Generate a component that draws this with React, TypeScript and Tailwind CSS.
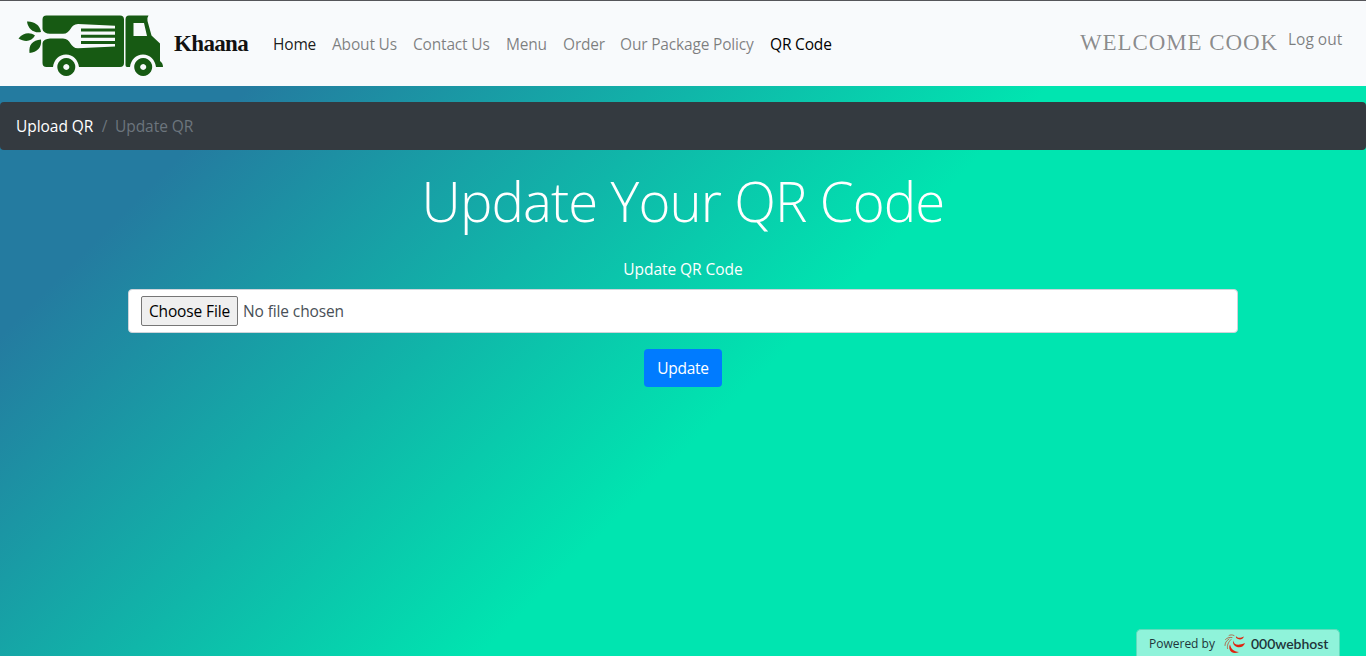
import React from "react";

const links = [
  { label: "Home", cls: "w-[59px] text-black/90" },
  { label: "About Us", cls: "w-[81px] text-black/50" },
  { label: "Contact Us", cls: "w-[93px] text-black/50" },
  { label: "Menu", cls: "w-[57px] text-black/50" },
  { label: "Order", cls: "w-[57px] text-black/50" },
  { label: "Our Package Policy", cls: "w-[150px] text-black/50" },
  { label: "QR Code", cls: "w-[80px] text-black" },
];

function TruckLogo() {
  return (
    <svg width="150" height="70" viewBox="15 10 150 70" fill="#175a13" className="mt-[3px] block shrink-0">
      <path d="M27 21.500c6-.5 13 3 14 10.500c-6.500 1.500-13-2.500-14-10.500z" />
      <path d="M18.500 38.500c5-6 11.500-6.500 16.500-3c-3 6-10 7-16.500 3z" />
      <path d="M29.500 53c-1-8 3-13 11.500-13.500c1 8-4 13-11.500 13.500z" />
      <path d="M46.500 15.500H120q4 0 4 4V63q0 4-4 4H79c-1-7.500-6-12.500-13-12.500S54 59.500 53 67h-6.500q-4 0-4-4V19.500q0-4 4-4z" />
      <path d="M42 29q2 4.500 8 4.800H63c8 0 7-9.800 15-9.800l37 1.800v20.700l-37 1.800c-8 0-7-9.800-15-9.800H50q-6 .3-8 4.800z" fill="#f8fafc" />
      <path d="M81 28.500h34v3H81zM81 34.700h34v3H81zM81 40.900h34v3H81z" />
      <path fillRule="evenodd" d="M131 15.500h17.500q-2 3-1 5.500l4 14.500l8.500 8v17.500q3 2 3 6h-7c-1-7.500-6-12.500-13-12.500s-12 5-13 12.500h-3q-1.500 0-1.500-2v-45.500q0-4 3.500-4zM133.500 23v13h13.500l-3-13z" />
      <path fillRule="evenodd" d="M66.300 58a9 9 0 1 0 .01 0zM66.300 64a3 3 0 1 1-.01 0z" />
      <path fillRule="evenodd" d="M143.200 58a9 9 0 1 0 .01 0zM143.200 64a3 3 0 1 1-.01 0z" />
    </svg>
  );
}

function HostLogo() {
  return (
    <svg width="26" height="24" viewBox="0 0 26 24" fill="#df2411" className="shrink-0">
      <path d="M11 8.500c1 4.500 5 5.500 12 2.500c-1 3.500-4.500 5-8 4c-3-1-4.500-3.500-4-6.500z" />
      <path d="M14 4c1 2 4 2.500 8 .5c-1 2.500-3.500 3.500-6 2.500c-1.500-.5-2.500-1.500-2-3z" />
      <path d="M8 12.500c1 4.500 3.500 7 9 7.500c-4 2-8.500 1-9.500-3c-.4-2-.2-3 .5-4.500z" />
      <path d="M9 7.500c-3 3-4 6-3.500 9M7 7c-3 2-4 4-4 6.500M10 5.500c-3-.5-5 .5-6.500 2M12 3.500c-2-1-4-.7-5 0" fill="none" stroke="#b5502f" strokeWidth=".8" strokeLinecap="round" />
    </svg>
  );
}

export default function App() {
  return (
    <div className="flex h-[656px] w-full flex-col overflow-hidden bg-[linear-gradient(135deg,#247ba0_16.600%,#00e5b0_56.200%)] font-['Open_Sans','Noto_Sans',sans-serif] text-[15.500px] leading-6">
      <nav className="flex h-[86px] shrink-0 items-center border-t border-[#55565a] bg-[#f8fafc] pr-4 pl-[15px]">
        <TruckLogo />
        <span className="ml-[9px] w-[91px] font-['Liberation_Serif',serif] text-[23px] font-bold tracking-[-0.650px] text-[#111]">Khaana</span>
        <ul className="flex whitespace-nowrap">
          {links.map((l) => (
            <li key={l.label} className={l.cls + " shrink-0 px-2 tracking-[-0.180px]"}>{l.label}</li>
          ))}
        </ul>
        <div className="ml-auto flex items-center whitespace-nowrap text-black/50">
          <span className="mr-[9px] mb-[2px] w-[199px] font-['Liberation_Serif',serif] text-[23px] tracking-[0.900px] text-black/45 uppercase">Welcome cook</span>
          <span className="mb-[9px] w-[62px]">Log out</span>
        </div>
      </nav>
      <ol className="mt-4 flex h-12 shrink-0 items-center rounded bg-[#343a40] px-4 tracking-[-0.050px] text-[#6c757d]">
        <li className="w-[78px] whitespace-nowrap text-white">Upload QR</li>
        <li className="w-[21px] text-center">/</li>
        <li>Update QR</li>
      </ol>
      <main className="flex flex-col items-center text-white">
        <h1 className="mt-[18px] text-[54.500px] leading-[67px] font-light tracking-[-0.900px] whitespace-nowrap">Update Your QR Code</h1>
        <label className="mt-[22px] tracking-[-0.050px]">Update QR Code</label>
        <div className="mt-[8px] flex h-[44px] w-[1110px] items-center rounded border border-[#ced4da] bg-white px-3 text-[#495057]">
          <button className="h-[30px] w-[97px] rounded-[2px] border border-[#767676] bg-[#efefef] tracking-[-0.120px] whitespace-nowrap text-black">Choose File</button>
          <span className="ml-[5px] tracking-[-0.120px]">No file chosen</span>
        </div>
        <button className="mt-4 h-[38px] w-[78px] rounded bg-[#007bff] tracking-[-0.250px]">Update</button>
      </main>
      <footer className="mt-auto mr-[26px] flex h-[27px] w-[204px] items-center self-end rounded-t-[5px] border border-b-0 border-[#5fdcbc] bg-[#8ff3da] pt-[2px] pl-3 text-[12px] whitespace-nowrap text-[#21353a]">
        <span className="w-[73px]">Powered by</span>
        <HostLogo />
        <span className="ml-[3px] font-['Lato',sans-serif] text-[14px] font-semibold tracking-[-0.050px]">000webhost</span>
      </footer>
    </div>
  );
}
